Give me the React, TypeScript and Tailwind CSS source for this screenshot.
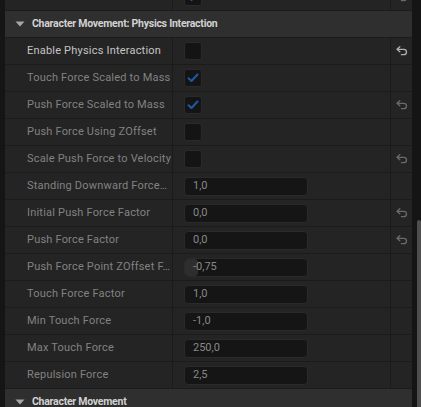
import React from "react"

type Row = {
  label: string
  kind: "check" | "number"
  checked?: boolean
  value?: string
  reset?: boolean
  active?: boolean
  slider?: boolean
}

const rows: Row[] = [
  { label: "Enable Physics Interaction", kind: "check", checked: false, reset: true, active: true },
  { label: "Touch Force Scaled to Mass", kind: "check", checked: true },
  { label: "Push Force Scaled to Mass", kind: "check", checked: true, reset: true },
  { label: "Push Force Using ZOffset", kind: "check", checked: false },
  { label: "Scale Push Force to Velocity", kind: "check", checked: false, reset: true },
  { label: "Standing Downward Force…", kind: "number", value: "1,0" },
  { label: "Initial Push Force Factor", kind: "number", value: "0,0", reset: true },
  { label: "Push Force Factor", kind: "number", value: "0,0", reset: true },
  { label: "Push Force Point ZOffset F…", kind: "number", value: "-0,75", slider: true },
  { label: "Touch Force Factor", kind: "number", value: "1,0" },
  { label: "Min Touch Force", kind: "number", value: "-1,0" },
  { label: "Max Touch Force", kind: "number", value: "250,0" },
  { label: "Repulsion Force", kind: "number", value: "2,5" },
]

function ResetIcon({ active }: { active?: boolean }) {
  return (
    <svg width="12" height="10" viewBox="0 0 12 10" fill="none">
      <path
        d="M3.8 0.8 L1 3.3 L3.8 5.8 M1.3 3.3 H7.8 A2.7 2.7 0 0 1 7.8 8.7 H5.4"
        stroke={active ? "#b0b0b0" : "#6a6a6a"}
        strokeWidth="1.3"
        strokeLinecap="round"
        strokeLinejoin="round"
      />
    </svg>
  )
}

function Checkbox({ checked }: { checked?: boolean }) {
  return (
    <div className="w-[18px] h-[18px] rounded-[3px] bg-[#141414] border border-[#2a2a2a] flex items-center justify-center">
      {checked && (
        <svg width="12" height="10" viewBox="0 0 12 10" fill="none">
          <path d="M1.5 5.2 L4.5 8 L10.5 1.5" stroke="#1d5ba6" strokeWidth="2" strokeLinecap="round" strokeLinejoin="round" />
        </svg>
      )}
    </div>
  )
}

function NumberBox({ value, slider }: { value?: string; slider?: boolean }) {
  return (
    <div className="relative w-[124px] h-[19px] rounded-[4px] bg-[#151515] border border-[#2a2a2a] flex items-center pl-[8px] text-[11px] text-[#888888]">
      {slider && <div className="absolute left-0 top-0 bottom-0 w-[13px] rounded-[4px] bg-[#2e2e2e]" />}
      <span className="relative">{value}</span>
    </div>
  )
}

function PropRow({ row }: { row: Row }) {
  return (
    <div className="flex h-[27px] border-b border-[#1b1b1b] bg-[#242424]">
      <div
        className={`w-[168px] pl-[22px] flex items-center whitespace-nowrap overflow-hidden text-[11px] tracking-[0.2px] border-r border-[#1b1b1b] ${
          row.active ? "text-[#c4c4c4]" : "text-[#828282]"
        }`}
      >
        {row.label}
      </div>
      <div className="flex-1 pl-[11px] flex items-center border-r border-[#1b1b1b]">
        {row.kind === "check" ? <Checkbox checked={row.checked} /> : <NumberBox value={row.value} slider={row.slider} />}
      </div>
      <div className="w-[21px] flex items-center justify-center">{row.reset && <ResetIcon active={row.active} />}</div>
    </div>
  )
}

function Header({ title }: { title: string }) {
  return (
    <div className="flex items-center h-[27px] border-b border-[#1b1b1b] bg-[#2f2f2f]">
      <svg width="10" height="6" viewBox="0 0 10 6" className="ml-[10px] mr-[7px]">
        <path d="M0.5 0.5 H9.5 L5 5.5 Z" fill="#a6a6a6" />
      </svg>
      <span className="text-[10.5px] font-bold text-[#d2d2d2] tracking-[-0.25px] whitespace-nowrap">{title}</span>
    </div>
  )
}

export default function App() {
  return (
    <div className="w-[421px] h-[407px] overflow-hidden bg-[#151515] flex" style={{ fontFamily: "Roboto, 'Liberation Sans', sans-serif" }}>
      <div className="w-[5px]" />
      <div className="w-[407px] h-full overflow-hidden">
        <div className="-mt-[16px]">
          <PropRow row={{ label: "", kind: "check", checked: true, reset: true }} />
          <Header title="Character Movement: Physics Interaction" />
          {rows.map((r) => (
            <PropRow key={r.label} row={r} />
          ))}
          <Header title="Character Movement" />
        </div>
      </div>
      <div className="w-[9px] h-full flex flex-col items-end">
        <div className="h-[220px]" />
        <div className="w-[4px] flex-1 rounded-t-[2px] bg-[#4e4e4e]" />
      </div>
    </div>
  )
}
